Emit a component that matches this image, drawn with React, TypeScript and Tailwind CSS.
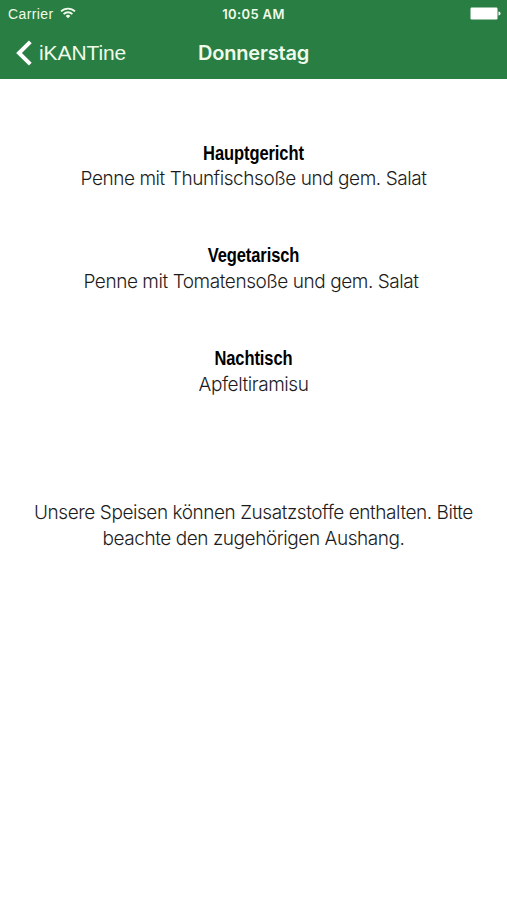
import clsx from 'clsx';

type Dish = {
  title: string;
  description: string;
  textClass?: string;
};

const dishes: Dish[] = [
  {
    title: 'Hauptgericht',
    description: 'Penne mit Thunfischsoße und gem. Salat',
  },
  {
    title: 'Vegetarisch',
    description: 'Penne mit Tomatensoße und gem. Salat',
    textClass: 'pr-[5px]',
  },
  {
    title: 'Nachtisch',
    description: 'Apfeltiramisu',
  },
];

function WifiIcon() {
  return (
    <svg width="16" height="12" viewBox="0 0 16 12" fill="none" stroke="#effbea" strokeWidth="1.8">
      <path d="M1 4.4a10 10 0 0 1 14 0" />
      <path d="M3.6 7.1a6.2 6.2 0 0 1 8.8 0" />
      <path d="M8 11.3 5.6 8.9a3.4 3.4 0 0 1 4.8 0Z" fill="#effbea" stroke="none" />
    </svg>
  );
}

function BatteryIcon() {
  return (
    <svg width="31" height="13" viewBox="0 0 31 13" fill="#ffffff">
      <rect x="0.5" y="0.5" width="27" height="12" rx="1.2" />
      <path d="M28.5 4.5c1.5.3 2 1 2 2s-.5 1.7-2 2Z" />
    </svg>
  );
}

function StatusBar() {
  return (
    <div className="grid h-[27px] grid-cols-3 items-center pl-2 pr-[6px] text-[14px] text-[#effbea]">
      <div className="flex items-center gap-[6px]">
        <span className="pt-[2px] tracking-[0.4px]">Carrier</span>
        <span className="-mt-px">
          <WifiIcon />
        </span>
      </div>
      <span className="pr-[2px] pt-[2px] text-center font-['Inter'] text-[13px] font-semibold tracking-[0.35px]">
        10:05 AM
      </span>
      <div className="flex justify-end">
        <BatteryIcon />
      </div>
    </div>
  );
}

function NavBar() {
  return (
    <div className="grid h-[52px] grid-cols-3 items-center text-[21px] text-[#effbea]">
      <button className="flex items-center gap-[7px] pl-4">
        <svg width="16" height="26" viewBox="0 0 16 26" fill="none" stroke="#ffffff" strokeWidth="4">
          <path d="M14.3 1.8 3 13l11.3 11.2" />
        </svg>
        <span className="tracking-[-0.1px]">iKANTine</span>
      </button>
      <h1 className="text-center font-['Inter'] text-[20px] font-semibold tracking-[-0.2px]">Donnerstag</h1>
    </div>
  );
}

export default function App() {
  return (
    <div className="min-h-[900px] w-full bg-white font-['Liberation_Sans',Arial,sans-serif]">
      <header className="h-[79px] bg-[#297e43]">
        <StatusBar />
        <NavBar />
      </header>

      <main className="px-6 pt-[61.8px] text-center font-['Inter','Liberation_Sans',sans-serif] text-[19px] font-light leading-[25.65px] tracking-[-0.44px] text-[#1c1c1c]">
        {dishes.map((dish) => (
          <section key={dish.title} className="mb-[51.3px]">
            {/* condensed bold heading */}
            <h2 className="origin-center scale-x-[0.825] font-['Liberation_Sans'] text-[20px] font-bold tracking-[-0.1px] text-black">
              {dish.title}
            </h2>
            <p className={clsx(dish.textClass)}>{dish.description}</p>
          </section>
        ))}

        <p className="mt-[102.6px]">
          Unsere Speisen können Zusatzstoffe enthalten. Bitte
          <br />
          beachte den zugehörigen Aushang.
        </p>
      </main>
    </div>
  );
}
